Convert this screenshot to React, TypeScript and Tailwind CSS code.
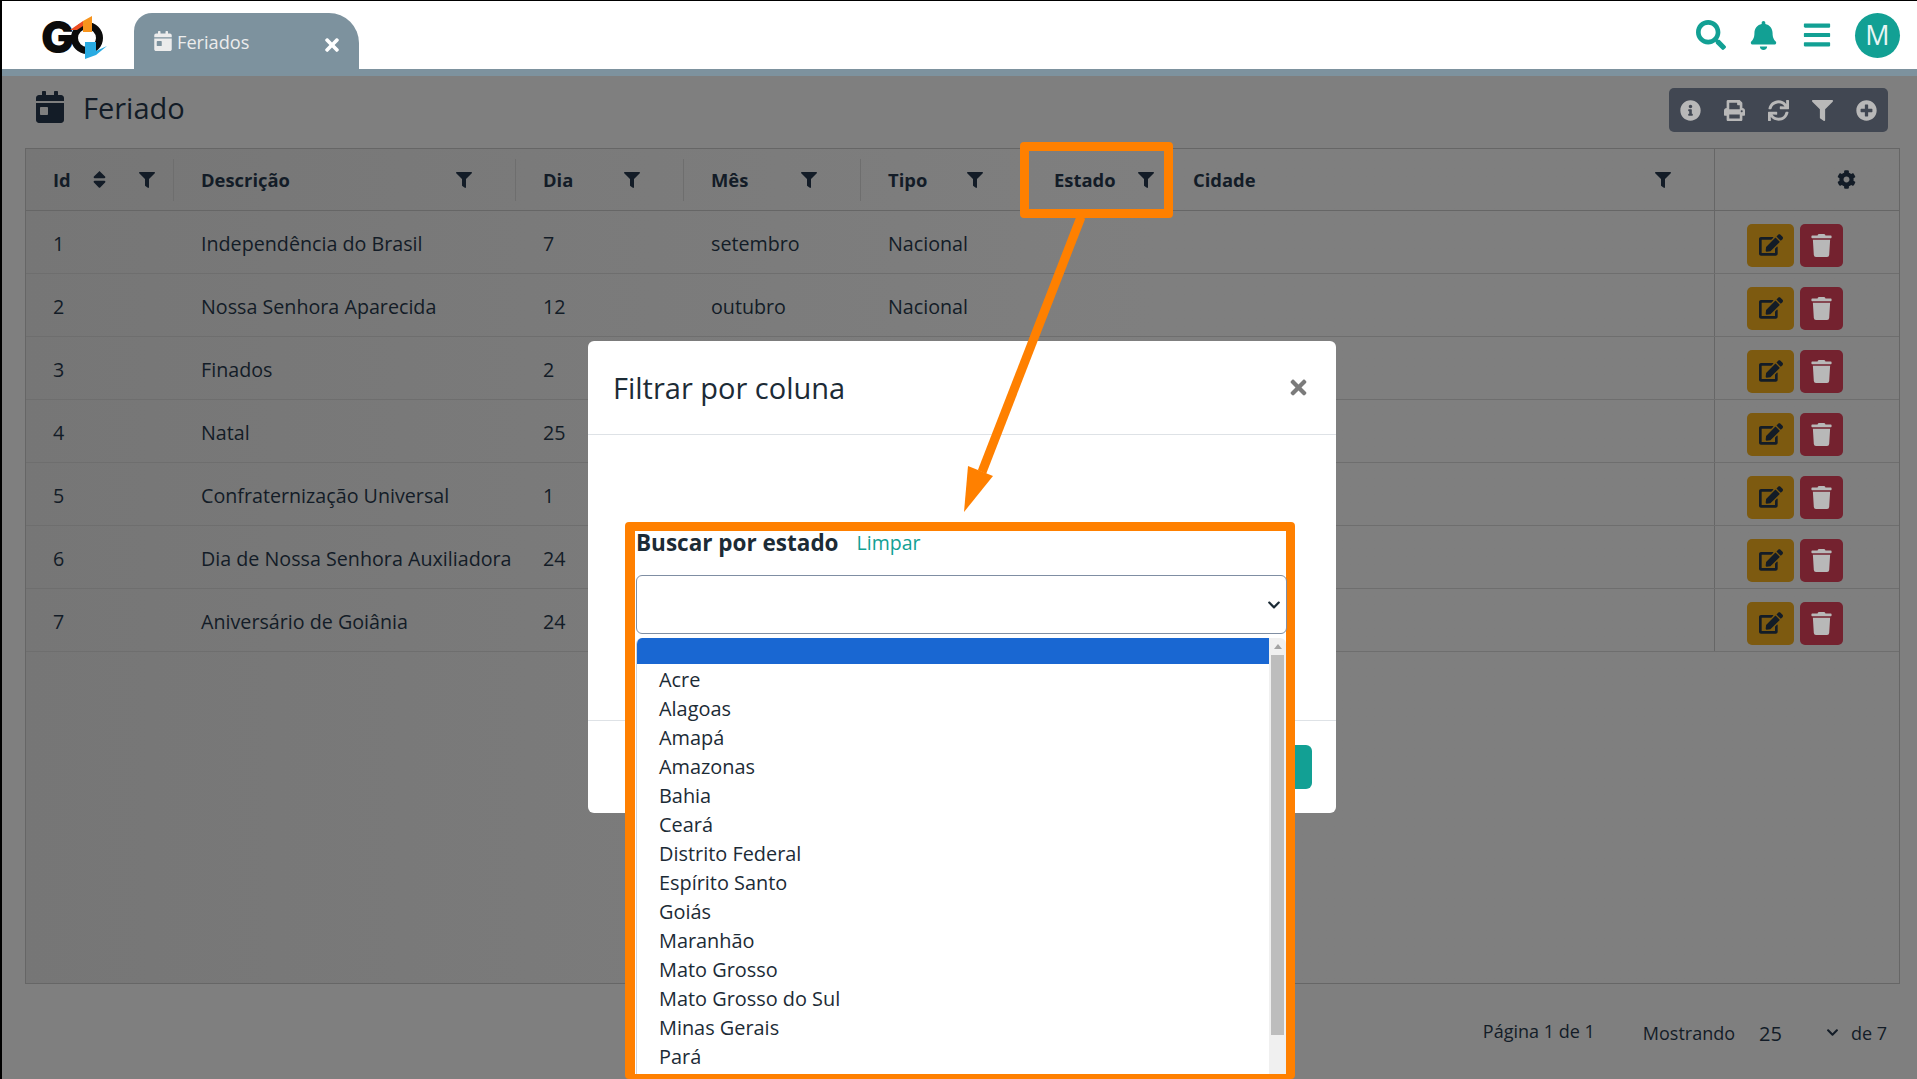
import {
  FaBars,
  FaBell,
  FaCalendarDay,
  FaChevronDown,
  FaCog,
  FaEdit,
  FaFilter,
  FaInfoCircle,
  FaPlusCircle,
  FaPrint,
  FaSearch,
  FaSort,
  FaSync,
  FaTimes,
  FaTrash,
} from "react-icons/fa";

const columns = [
  { label: "Id", cell: "pl-[27px] pr-[18px] border-r", sort: true },
  { label: "Descrição", cell: "pl-[27px] pr-[43px] border-r" },
  { label: "Dia", cell: "pl-[27px] pr-[43px] border-r" },
  { label: "Mês", cell: "pl-[27px] pr-[43px] border-r" },
  { label: "Tipo", cell: "pl-[27px] pr-[38px]" },
  { label: "Estado", cell: "pl-[33px] pr-[19px]" },
  { label: "Cidade", cell: "pl-[20px] pr-[43px]" },
];

// o resto das linhas fica atras do modal
const rows = [
  ["1", "Independência do Brasil", "7", "setembro", "Nacional"],
  ["2", "Nossa Senhora Aparecida", "12", "outubro", "Nacional"],
  ["3", "Finados", "2", "", ""],
  ["4", "Natal", "25", "", ""],
  ["5", "Confraternização Universal", "1", "", ""],
  ["6", "Dia de Nossa Senhora Auxiliadora", "24", "", ""],
  ["7", "Aniversário de Goiânia", "24", "", ""],
];

const estados = [
  "Acre",
  "Alagoas",
  "Amapá",
  "Amazonas",
  "Bahia",
  "Ceará",
  "Distrito Federal",
  "Espírito Santo",
  "Goiás",
  "Maranhão",
  "Mato Grosso",
  "Mato Grosso do Sul",
  "Minas Gerais",
  "Pará",
];

const gridCols = "grid grid-cols-[148px_342px_168px_177px_160px_152px_541px_186px]";

function Logo() {
  return (
    <svg width="70" height="56" viewBox="0 0 70 56">
      <text x="2" y="46" fontFamily="Inter, sans-serif" fontWeight="900" fontSize="44" fill="#0b0b0b">
        G
      </text>
      <circle cx="48" cy="31" r="12.5" fill="none" stroke="#0b0b0b" strokeWidth="7" />
      <path d="M31 23 L44 14 L44 19 L38 23 Z" fill="#ee4d23" />
      <path d="M44 14 L53 9 L53 25 L44 25 Z" fill="#f7941d" />
      <path d="M46 35 L57 35 L57 44 L68 39 L57 48 L46 52 Z" fill="#29abe2" />
    </svg>
  );
}

function Modal() {
  return (
    <div className="absolute left-[588px] top-[341px] flex h-[472px] w-[748px] flex-col rounded-[6px] bg-white">
      <div className="flex h-[94px] shrink-0 items-center justify-between border-b border-[#dee2e6] pl-[25px] pr-[26px]">
        <h5 className="text-[29px] leading-none text-[#1c2b36]">Filtrar por coluna</h5>
        <FaTimes className="text-[23px] text-[#7b7b7b]" />
      </div>
      <div className="flex-1" />
      <div className="flex h-[93px] shrink-0 items-center justify-end border-t border-[#dee2e6] pr-[24px]">
        <button className="h-[44px] w-[100px] rounded-[6px] bg-[#12a094] text-white" />
      </div>
    </div>
  );
}

function EstadoSelect() {
  return (
    <div className="absolute left-[625px] top-[522px] flex h-[557px] w-[670px] flex-col rounded-[4px] border-t-[9px] border-r-[9px] border-b-[5px] border-l-[10px] border-[#ff8000] bg-white">
      <div className="flex h-[23px] items-center pl-[1px] text-[#1c2b36]">
        <span className="text-[22.5px] font-bold">Buscar por estado</span>
        <span className="ml-[18px] text-[19.5px] text-[#12a094]">Limpar</span>
      </div>
      <div className="ml-px mt-[21px] flex h-[59px] w-[651px] shrink-0 items-center justify-end rounded-[6px] border border-[#7f8ea3] pr-[5px]">
        <FaChevronDown className="text-[14px] text-[#1c2b36]" />
      </div>
      <div className="ml-px mt-[4px] flex min-h-0 flex-1 overflow-hidden rounded-t-[6px] border-l border-[#cfd4da]">
        <div className="flex-1">
          <div className="h-[26px] bg-[#1967d2]" />
          {estados.map((estado) => (
            <div key={estado} className="flex h-[29px] items-center pl-[22px] pt-[2px] text-[19.9px] text-[#1c2b36]">
              {estado}
            </div>
          ))}
        </div>
        <div className="flex w-[17px] shrink-0 flex-col items-center bg-[#f0f0f0]">
          <div className="mt-[6px] h-0 w-0 border-x-[4px] border-b-[5px] border-x-transparent border-b-[#a3a3a3]" />
          <div className="mt-[6px] h-[380px] w-[13px] bg-[#bdbdbd]" />
        </div>
      </div>
    </div>
  );
}

function Annotations() {
  return (
    <>
      <div className="absolute left-[1020px] top-[142px] h-[76px] w-[153px] rounded-[4px] border-[9px] border-[#ff8000]" />
      <svg className="absolute left-0 top-0" width="1917" height="1079">
        <path d="M1081 217 L982 472" stroke="#ff8000" strokeWidth="9" fill="none" />
        <path d="M964 512 L968 466 L993 476 Z" fill="#ff8000" />
      </svg>
    </>
  );
}

export default function App() {
  return (
    <div className="relative h-[1079px] w-[1917px] overflow-hidden font-['Open_Sans',sans-serif]">
      <div className="flex h-full flex-col border-t border-l-2 border-black bg-[#7f7f7f] text-[#131c27]">
        {/* Barra do topo */}
        <header className="flex h-[68px] shrink-0 items-end bg-white">
          <div className="flex h-full w-[132px] items-center pl-[37px]">
            <Logo />
          </div>
          <div className="flex h-[56px] w-[225px] items-center rounded-tl-[18px] rounded-tr-[30px] bg-[#7d929e] pl-[19px] pr-[17px] text-[#ececec]">
            <FaCalendarDay className="text-[20px]" />
            <span className="ml-[4px] mt-[4px] text-[18.2px]">Feriados</span>
            <FaTimes className="ml-auto mt-[8px] text-[20px] text-white" />
          </div>
          <div className="ml-auto flex h-full items-center pr-[17px] text-[#12a094]">
            <FaSearch className="text-[30px]" />
            <FaBell className="ml-[23px] text-[29px]" />
            <FaBars className="ml-[24px] text-[30px]" />
            <div className="ml-[23px] flex h-[45px] w-[45px] items-center justify-center rounded-full bg-[#12a094] text-[27px] text-[#e8f5f3]">
              M
            </div>
          </div>
        </header>
        <div className="h-[7px] shrink-0 bg-[#7d929e]" />

        {/* Conteudo */}
        <main className="flex min-h-0 flex-1 flex-col pl-[23px] pr-[17px]">
          <div className="flex h-[72px] shrink-0 items-center pb-[4px]">
            <FaCalendarDay className="-mt-[6px] ml-[9px] text-[32px]" />
            <h1 className="-mt-[6px] ml-[17px] text-[29px] leading-none">Feriado</h1>
            <div className="ml-auto mr-[12px] flex h-[44px] w-[219px] items-center justify-between rounded-[5px] bg-[#414752] px-[11px] text-[21px] text-[#b8b8b8]">
              <FaInfoCircle />
              <FaPrint />
              <FaSync />
              <FaFilter />
              <FaPlusCircle />
            </div>
          </div>

          <div className="h-[836px] shrink-0 border border-[#666666] bg-linear-to-r from-[#767676] to-[#7f7f7f] to-60%">
            <div className={`${gridCols} h-[62px] border-b border-[#666666] text-[18.4px] font-bold`}>
              {columns.map((col) => (
                <div key={col.label} className={`my-auto flex h-[42px] items-center border-[#6e6e6e] ${col.cell}`}>
                  <span>{col.label}</span>
                  {col.sort && <FaSort className="ml-[18px] text-[21px]" />}
                  <FaFilter className="ml-auto text-[16px]" />
                </div>
              ))}
              <div className="flex items-center justify-end border-l border-[#666666] pr-[44px]">
                <FaCog className="text-[19px]" />
              </div>
            </div>
            {rows.map((row) => (
              <div key={row[0]} className={`${gridCols} h-[63px] border-b border-[#6e6e6e] text-[19.7px]`}>
                {row.map((cell, i) => (
                  <div key={i} className="flex items-center whitespace-nowrap pl-[27px] pt-[3px]">
                    {cell}
                  </div>
                ))}
                <div />
                <div />
                <div className="flex items-center justify-end gap-[6px] border-l border-[#666666] pr-[57px] pt-[6px]">
                  <button className="flex h-[43px] w-[47px] items-center justify-center rounded-[5px] bg-[#7d5a10] text-[24px]">
                    <FaEdit />
                  </button>
                  <button className="flex h-[43px] w-[43px] items-center justify-center rounded-[5px] bg-[#74222f] text-[23px] text-[#b8b8b8]">
                    <FaTrash />
                  </button>
                </div>
              </div>
            ))}
          </div>

          <div className="flex flex-1 items-center justify-end pr-[13px] pt-[4px] text-[18px]">
            <span className="-mt-[4px]">Página 1 de 1</span>
            <span className="ml-[48px]">Mostrando</span>
            <span className="ml-[24px] text-[20px]">25</span>
            <FaChevronDown className="ml-[44px] -mt-[2px] text-[13px]" />
            <span className="ml-[12px]">de 7</span>
          </div>
        </main>
      </div>

      <Modal />
      <EstadoSelect />
      <Annotations />
    </div>
  );
}
